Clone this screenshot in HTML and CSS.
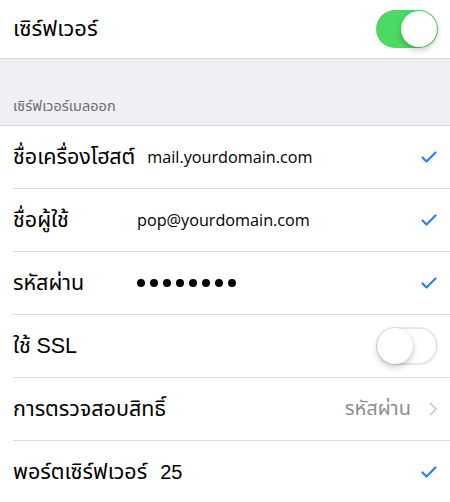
FILE: index.html
```html
<!DOCTYPE html>
<html lang="th">
<head>
    <meta charset="UTF-8">
    <meta name="viewport" content="width=device-width, initial-scale=1.0">
    <title>เซิร์ฟเวอร์เมลออก</title>
    <link rel="stylesheet" href="styles.css">
</head>
<body>
    <div class="cell cell-top">
        <span class="label">เซิร์ฟเวอร์</span>
        <span class="switch on"><span class="knob"></span></span>
    </div>

    <div class="section-head">เซิร์ฟเวอร์เมลออก</div>

    <div class="group">
        <div class="cell">
            <span class="label">ชื่อเครื่องโฮสต์</span>
            <span class="value value-host">mail.yourdomain.com</span>
            <svg class="check" viewBox="0 0 16 12"><path d="M1.5 6.5 L5.5 10.5 L14.5 1.5"/></svg>
        </div>
        <div class="cell">
            <span class="label label-col">ชื่อผู้ใช้</span>
            <span class="value">pop@yourdomain.com</span>
            <svg class="check" viewBox="0 0 16 12"><path d="M1.5 6.5 L5.5 10.5 L14.5 1.5"/></svg>
        </div>
        <div class="cell">
            <span class="label label-col">รหัสผ่าน</span>
            <span class="dots">
                <i></i><i></i><i></i><i></i><i></i><i></i><i></i><i></i>
            </span>
            <svg class="check" viewBox="0 0 16 12"><path d="M1.5 6.5 L5.5 10.5 L14.5 1.5"/></svg>
        </div>
        <div class="cell">
            <span class="label">ใช้ <span class="latin">SSL</span></span>
            <span class="switch"><span class="knob"></span></span>
        </div>
        <div class="cell">
            <span class="label">การตรวจสอบสิทธิ์</span>
            <span class="detail">รหัสผ่าน</span>
            <svg class="chevron" viewBox="0 0 8 14"><path d="M1 1 L7 7 L1 13"/></svg>
        </div>
        <div class="cell">
            <span class="label">พอร์ตเซิร์ฟเวอร์</span>
            <span class="latin port">25</span>
            <svg class="check" viewBox="0 0 16 12"><path d="M1.5 6.5 L5.5 10.5 L14.5 1.5"/></svg>
        </div>
    </div>
</body>
</html>
```

FILE: styles.css
```css
body {
    margin: 0;
    background-color: #fff;
    font-family: "Noto Sans Thai", "Noto Sans", sans-serif;
    color: #000;
}

.cell {
    display: flex;
    align-items: center;
    height: 62px;
    margin-left: 13px;
    padding-right: 12px;
    background-color: #fff;
    border-bottom: 1px solid #dcdce0;
}
.group .cell:last-child {
    border-bottom: none;
}
.cell-top {
    height: 58px;
    margin-left: 0;
    padding-left: 13px;
    border-bottom: 1px solid #d6d6da;
}

.label {
    font-size: 21.5px;
    white-space: nowrap;
}
.label-col {
    min-width: 124px;
}
.cell-top .label {
    font-size: 22px;
}
.latin {
    font-family: "Liberation Sans", Arial, sans-serif;
}

.value {
    font-family: "Open Sans", "Noto Sans", sans-serif;
    font-size: 16.2px;
}
.value-host {
    margin-left: 12px;
}
.port {
    font-size: 20px;
    margin-left: 13px;
}

.dots {
    display: flex;
    gap: 5px;
}
.dots i {
    width: 8px;
    height: 8px;
    border-radius: 50%;
    background-color: #000;
}

.check {
    width: 16px;
    height: 12px;
    margin-left: auto;
    margin-right: 1px;
    fill: none;
    stroke: #2b7ff0;
    stroke-width: 2.2;
    stroke-linecap: round;
    stroke-linejoin: round;
}

.detail {
    margin-left: auto;
    font-size: 20px;
    color: #8e8e93;
}
.chevron {
    width: 8px;
    height: 14px;
    margin-left: 18px;
    margin-right: 1px;
    fill: none;
    stroke: #c7c7cc;
    stroke-width: 1.6;
}

.switch {
    margin-left: auto;
    position: relative;
    width: 62px;
    height: 38px;
    border-radius: 19px;
    background-color: #fff;
    box-shadow: inset 0 0 0 2px #e5e5ea;
}
.switch .knob {
    position: absolute;
    top: 1px;
    left: 1px;
    width: 36px;
    height: 36px;
    border-radius: 50%;
    background-color: #fff;
    box-shadow: 0 3px 6px rgba(0, 0, 0, 0.22), 0 0 0 0.5px rgba(0, 0, 0, 0.08);
}
.switch.on {
    background-color: #4cd964;
    box-shadow: none;
}
.switch.on .knob {
    left: auto;
    right: 1px;
}

.section-head {
    height: 67px;
    box-sizing: border-box;
    padding: 0 13px 7px;
    display: flex;
    align-items: flex-end;
    background-color: #efeff4;
    border-bottom: 1px solid #d6d6da;
    font-size: 14.5px;
    color: #6d6d72;
}
```
